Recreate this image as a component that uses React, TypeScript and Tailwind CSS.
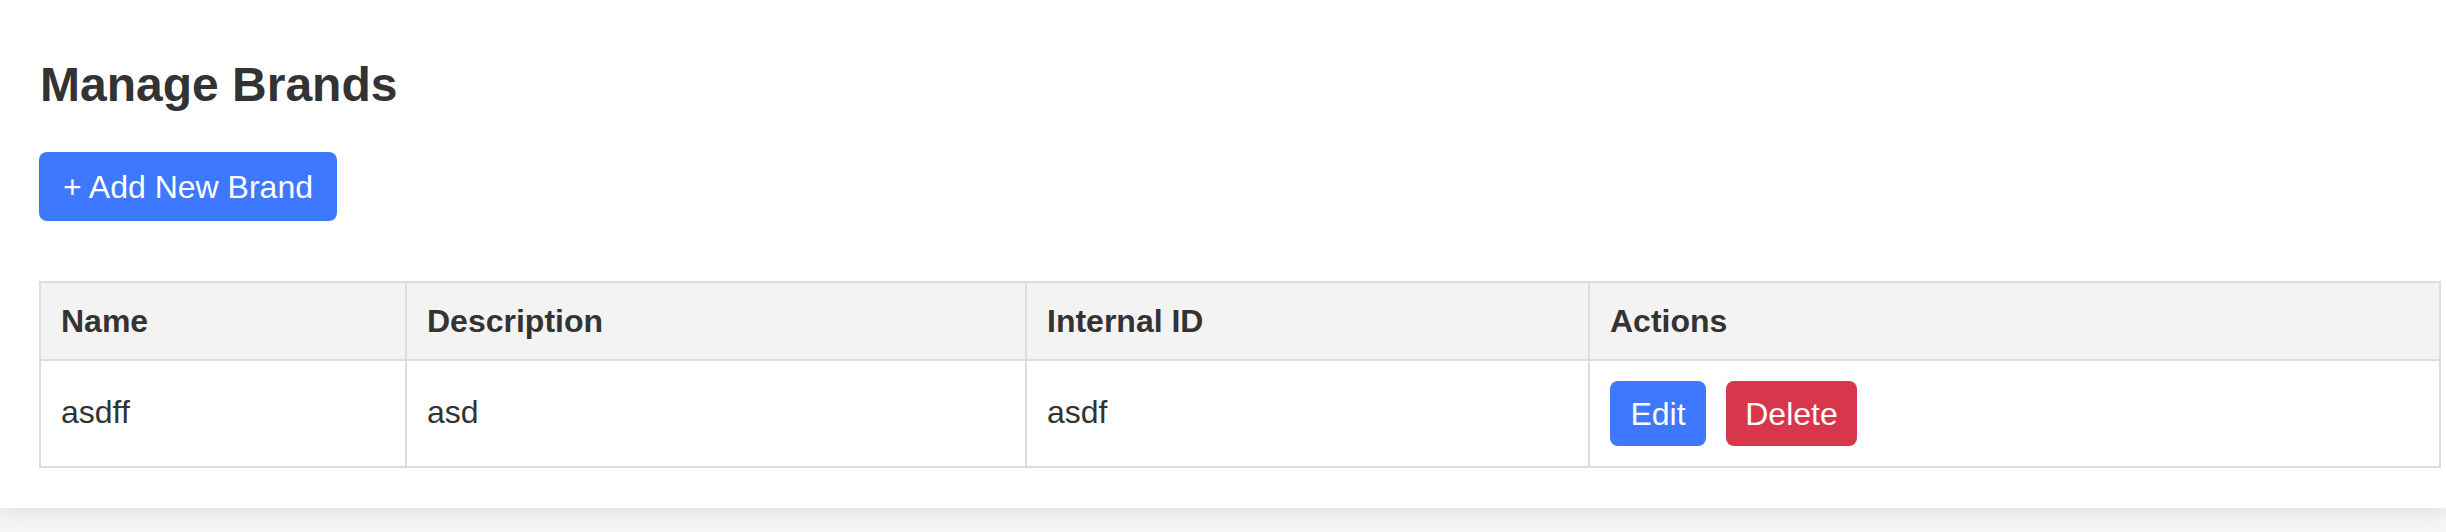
const brands = [{ name: 'asdff', description: 'asd', internalId: 'asdf' }];

export default function App() {
  return (
    <div className="min-h-[532px] bg-[#f5f5f5] font-['Liberation_Sans',Arial,sans-serif] text-[#333]">
      <div className="bg-white pl-[39px] pr-[7px] pt-[57px] pb-[40px] shadow-[0_6px_18px_rgba(0,0,0,0.07)]">
        <h2 className="m-0 text-[48px] font-bold leading-[56px] pl-px">Manage Brands</h2>

        <button
          type="button"
          className="mt-[39px] flex h-[69px] w-[298px] items-center justify-center rounded-[8px] bg-[#3d78fe] text-[32px] leading-none text-white"
        >
          + Add New Brand
        </button>

        <table className="mt-[60px] w-[2400px] table-fixed border-collapse text-[32px]">
          <colgroup>
            <col className="w-[366px]" />
            <col className="w-[620px]" />
            <col className="w-[563px]" />
            <col className="w-[851px]" />
          </colgroup>
          <thead>
            <tr className="h-[78px] bg-[#f3f3f3]">
              {['Name', 'Description', 'Internal ID', 'Actions'].map((h) => (
                <th
                  key={h}
                  className="border-2 border-[#dddddd] px-[20px] text-left align-middle font-bold"
                >
                  {h}
                </th>
              ))}
            </tr>
          </thead>
          <tbody>
            {brands.map((b) => (
              <tr key={b.internalId} className="h-[107px]">
                <td className="border-2 border-[#dddddd] px-[20px] pb-[3px] align-middle">{b.name}</td>
                <td className="border-2 border-[#dddddd] px-[20px] pb-[3px] align-middle">{b.description}</td>
                <td className="border-2 border-[#dddddd] px-[20px] pb-[3px] align-middle">{b.internalId}</td>
                <td className="border-2 border-[#dddddd] px-[20px] align-middle">
                  <div className="flex gap-[20px]">
                    <button
                      type="button"
                      className="flex h-[65px] w-[96px] items-center justify-center rounded-[8px] bg-[#3d78fe] text-[32px] leading-none text-white"
                    >
                      Edit
                    </button>
                    <button
                      type="button"
                      className="flex h-[65px] w-[131px] items-center justify-center rounded-[8px] bg-[#d6374b] text-[32px] leading-none text-white"
                    >
                      Delete
                    </button>
                  </div>
                </td>
              </tr>
            ))}
          </tbody>
        </table>
      </div>
    </div>
  );
}
